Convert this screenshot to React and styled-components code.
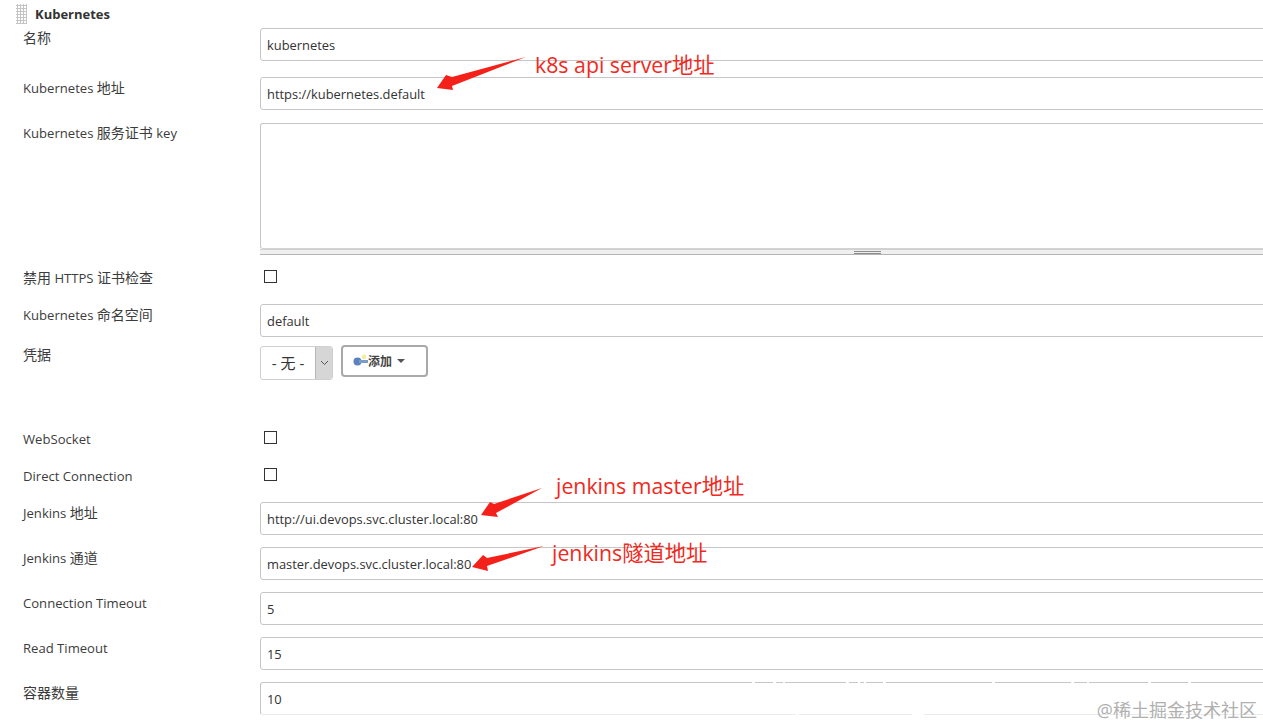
import React from 'react'
import styled, { createGlobalStyle } from 'styled-components'

const GlobalStyle = createGlobalStyle`
    html, body {
        margin: 0;
        padding: 0;
        background: #fff;
        overflow: hidden;
    }
    body {
        font-family: "Open Sans", "Noto Sans CJK SC", sans-serif;
        font-size: 13px;
        color: #333;
    }
`

const Page = styled.div`
    position: relative;
    width: 1263px;
    height: 727px;
    overflow: hidden;
    padding-top: 3px;
    box-sizing: border-box;
`

const Header = styled.div`
    display: flex;
    align-items: center;
    gap: 8px;
    height: 22px;
    margin-bottom: 3px;
    padding-left: 16px;
    font-weight: 700;
    font-size: 13px;
    color: #333;
`

const Grip = styled.span`
    width: 11px;
    height: 20px;
    background-image: radial-gradient(#c4c4c4 1px, transparent 1.1px);
    background-size: 3px 3px;
`

const Row = styled.div`
    display: grid;
    grid-template-columns: 260px 1040px;
    margin-bottom: ${p => p.$after}px;
    ${p => p.$check && 'height: 13px;'}
`

const Label = styled.label`
    padding-left: 23px;
    padding-top: ${p => p.$top || 0}px;
    line-height: 18px;
    font-size: 13.1px;
    color: #3c3c3c;
    ${p => p.$check && 'margin-top: -1px;'}
`

const Cjk = styled.span`
    font-size: 14px;
`

const Input = styled.div`
    box-sizing: border-box;
    height: 33px;
    padding-left: 6px;
    line-height: 33px;
    font-size: 12.9px;
    border: 1px solid #c6c6c6;
    border-radius: 3px;
    color: #333;
    ${p => p.$faint && 'border-bottom-color: #ebebeb;'}
`

const TextArea = styled.div`
    box-sizing: border-box;
    height: 126px;
    border: 1px solid #c6c6c6;
    border-bottom-color: #d2d2d2;
    border-radius: 3px 0 0 3px;
`

const Resizer = styled.div`
    position: relative;
    box-sizing: border-box;
    height: 6px;
    background: #efefef;
    border-top: 1px solid #d0d0d0;
    border-bottom: 1px solid #b4b4b4;
    &::after {
        content: '';
        position: absolute;
        left: 594px;
        top: 1px;
        width: 27px;
        height: 3px;
        box-sizing: border-box;
        border-top: 1px solid #8c8c8c;
        border-bottom: 1px solid #8c8c8c;
    }
`

const CheckBox = styled.span`
    display: block;
    box-sizing: border-box;
    width: 13px;
    height: 13px;
    margin-left: 4px;
    border: 1px solid #333;
`

const Controls = styled.div`
    display: flex;
    align-items: flex-start;
    gap: 8px;
`

const Select = styled.div`
    display: flex;
    box-sizing: border-box;
    width: 73px;
    height: 34px;
    border: 1px solid #cfcfcf;
    border-radius: 3px;
    overflow: hidden;
    font-size: 15px;
`

const SelectText = styled.span`
    flex: 1;
    text-align: center;
    line-height: 32px;
`

const SelectArrow = styled.span`
    display: flex;
    align-items: center;
    justify-content: center;
    width: 16px;
    background: #d6d6d6;
    border-left: 1px solid #b5b5b5;
`

const AddButton = styled.div`
    display: flex;
    align-items: center;
    box-sizing: border-box;
    width: 87px;
    height: 32px;
    margin-top: -1px;
    padding-left: 10px;
    border: 2px solid #a9a9a9;
    border-radius: 4px;
    font-size: 12px;
    font-weight: 600;
    color: #444;
`

const Caret = styled.span`
    width: 0;
    height: 0;
    margin-left: 5px;
    border-left: 4px solid transparent;
    border-right: 4px solid transparent;
    border-top: 4px solid #555;
`

const Note = styled.span`
    position: absolute;
    left: ${p => p.$x}px;
    top: ${p => p.$y}px;
    font-size: 21.3px;
    line-height: 28px;
    color: #f02a22;
    white-space: nowrap;
`

const Arrows = styled.svg`
    position: absolute;
    left: 0;
    top: 0;
    pointer-events: none;
`

const Watermark = styled.span`
    position: absolute;
    right: 6px;
    bottom: 5px;
    font-size: 18px;
    line-height: 24px;
    color: #b0b0b0;
    white-space: nowrap;
`

const Speck = styled.i`
    position: absolute;
    left: ${p => p.$x}px;
    top: ${p => p.$y}px;
    width: ${p => p.$w}px;
    height: 3px;
    background: #fff;
`

const KeyIcon = () => (
    <svg width="15" height="14" viewBox="0 0 15 14">
        <circle cx="11" cy="3" r="2.4" fill="#f4efa0" />
        <circle cx="4.5" cy="7.5" r="4" fill="#5b82bd" />
        <rect x="6" y="6" width="9" height="3" fill="#7c9cca" />
    </svg>
)

const fields = [
    { label: 'Connection Timeout', value: '5' },
    { label: 'Read Timeout', value: '15' },
]

// white gaps the watermark left on the last input's border
const specks = [
    [752, 681, 3], [773, 681, 3], [783, 681, 2], [846, 681, 3], [858, 681, 2], [864, 681, 2],
    [883, 681, 3], [992, 681, 3], [1071, 681, 3], [1087, 681, 2], [1148, 681, 3], [1188, 681, 3],
    [796, 713, 3], [912, 713, 12],
]

const App = () => {
    return (
        <Page>
            <GlobalStyle />
            <Header><Grip />Kubernetes</Header>

            <Row $after={16}>
                <Label $top={1}><Cjk>名称</Cjk></Label>
                <Input>kubernetes</Input>
            </Row>
            <Row $after={13}>
                <Label $top={2}>Kubernetes <Cjk>地址</Cjk></Label>
                <Input>https://kubernetes.default</Input>
            </Row>
            <Row $after={15}>
                <Label $top={1}>Kubernetes <Cjk>服务证书</Cjk> key</Label>
                <div>
                    <TextArea />
                    <Resizer />
                </div>
            </Row>
            <Row $check $after={21}>
                <Label $check><Cjk>禁用</Cjk> HTTPS <Cjk>证书检查</Cjk></Label>
                <CheckBox />
            </Row>
            <Row $after={9}>
                <Label $top={2}>Kubernetes <Cjk>命名空间</Cjk></Label>
                <Input>default</Input>
            </Row>
            <Row $after={51}>
                <Label><Cjk>凭据</Cjk></Label>
                <Controls>
                    <Select>
                        <SelectText>- 无 -</SelectText>
                        <SelectArrow>
                            <svg width="9" height="6" viewBox="0 0 9 6"><path d="M1 1l3.5 3.5L8 1" fill="none" stroke="#555" strokeWidth="1" /></svg>
                        </SelectArrow>
                    </Select>
                    <AddButton><KeyIcon />添加<Caret /></AddButton>
                </Controls>
            </Row>
            <Row $check $after={24}>
                <Label $check>WebSocket</Label>
                <CheckBox />
            </Row>
            <Row $check $after={21}>
                <Label $check>Direct Connection</Label>
                <CheckBox />
            </Row>
            <Row $after={12}>
                <Label $top={2}>Jenkins <Cjk>地址</Cjk></Label>
                <Input>http://ui.devops.svc.cluster.local:80</Input>
            </Row>
            <Row $after={12}>
                <Label $top={2}>Jenkins <Cjk>通道</Cjk></Label>
                <Input>master.devops.svc.cluster.local:80</Input>
            </Row>
            {fields.map(f => (
                <Row $after={12} key={f.label}>
                    <Label $top={2}>{f.label}</Label>
                    <Input>{f.value}</Input>
                </Row>
            ))}
            <Row $after={0}>
                <Label $top={2}><Cjk>容器数量</Cjk></Label>
                <Input $faint>10</Input>
            </Row>

            {specks.map(([x, y, w]) => <Speck key={x + '-' + y} $x={x} $y={y} $w={w} />)}

            <Arrows width="1263" height="727" viewBox="0 0 1263 727">
                <path fill="#f4211a" d="M526 57 L452 77 L446 75 L437 88 L453 90 L452 86 Z" />
                <path fill="#f4211a" d="M542 488 L494 504 L490 502 L481 515 L498 517 L496 513 Z" />
                <path fill="#f4211a" d="M544 546 L487 558 L483 555 L472 567 L488 571 L487 566 Z" />
            </Arrows>
            <Note $x={535} $y={51}>k8s api server地址</Note>
            <Note $x={556} $y={472}>jenkins master地址</Note>
            <Note $x={552} $y={539}>jenkins隧道地址</Note>
            <Watermark>@稀土掘金技术社区</Watermark>
        </Page>
    )
}

export default App
